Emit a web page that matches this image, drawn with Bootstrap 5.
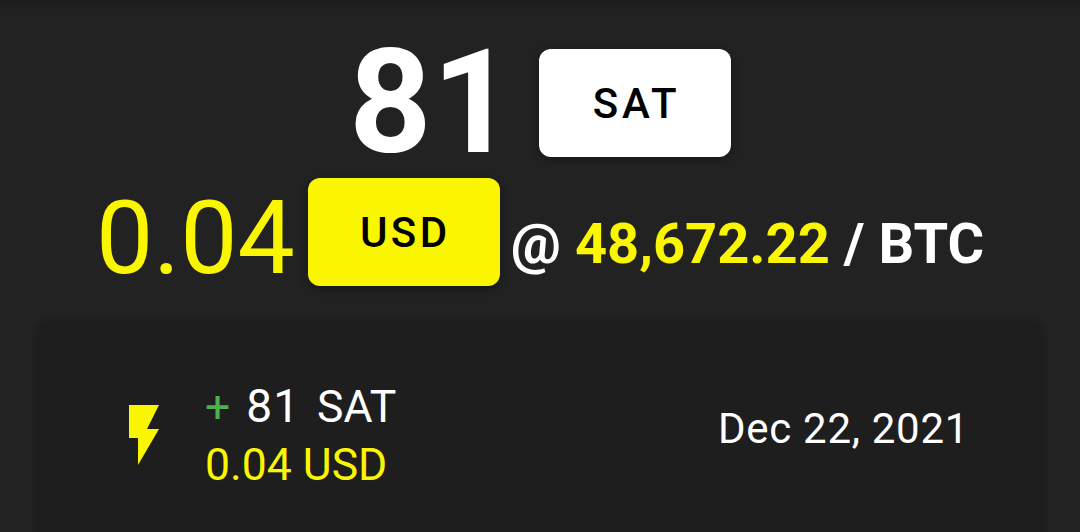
<!DOCTYPE html>
<html lang="en">
<head>
<meta charset="utf-8">
<meta name="viewport" content="width=device-width, initial-scale=1">
<title>Wallet</title>
<link href="https://cdn.jsdelivr.net/npm/bootstrap@5.3.0/dist/css/bootstrap.min.css" rel="stylesheet">
<style>
body{font-family:Roboto,sans-serif;background:#222;color:#fff;height:532px;overflow:hidden}
main{height:520px;overflow:hidden}
.topline{height:12px;background:linear-gradient(#1c1c1c,#222)}
.yellow{color:#faf602}
.amount{font-size:144px;font-weight:700;line-height:108px;letter-spacing:.5px;margin-right:24px}
.fiat{font-size:102px;line-height:120px;margin-right:13px}
.unit{width:192px;height:108px;border:0;border-radius:12px;font-size:42px;font-weight:500;letter-spacing:3.75px;padding:0 0 0 3px;color:#000;background:#fff;box-shadow:0 3px 8px rgba(0,0,0,.35)}
.unit-fiat{background:#faf602;letter-spacing:3.5px}
.rate{font-size:56px;font-weight:700;line-height:66px;padding-top:33px;margin-left:11px}
.balance{padding-top:37px}
.fiat-row{margin-top:21px;height:108px}
.tx{margin:36px 36px 0;height:260px;background:#1e1e1e;border:0;border-radius:12px;box-shadow:0 0 6px rgba(0,0,0,.2);color:#fff;font-size:44.5px;line-height:58px;padding:55px 75px 0 72px}
.bolt{margin:22px 25px 0 0}
.plus{color:#4caf50;margin-right:5px}
.sats{font-size:46px;letter-spacing:1px;margin-right:6px}
.date{font-size:42px;letter-spacing:.7px;margin-top:23px}
</style>
</head>
<body>
<div class="topline"></div>
<main>
<div class="balance d-flex justify-content-center"><span class="amount">81</span><button class="unit">SAT</button></div>
<div class="fiat-row d-flex justify-content-center"><span class="fiat yellow">0.04</span><button class="unit unit-fiat">USD</button><span class="rate">@ <span class="yellow">48,672.22</span> / BTC</span></div>
<section class="tx card d-flex flex-row align-items-start">
<svg class="bolt" width="72" height="72" viewBox="0 0 24 24" fill="#faf602"><path d="M7 2v11h3v9l7-12h-4l4-8z"/></svg>
<div><div><span class="plus">+</span> <span class="sats">81</span> SAT</div><div class="yellow">0.04 USD</div></div>
<span class="date ms-auto">Dec 22, 2021</span>
</section>
</main>
<script src="https://cdn.jsdelivr.net/npm/bootstrap@5.3.0/dist/js/bootstrap.bundle.min.js"></script>
</body>
</html>
